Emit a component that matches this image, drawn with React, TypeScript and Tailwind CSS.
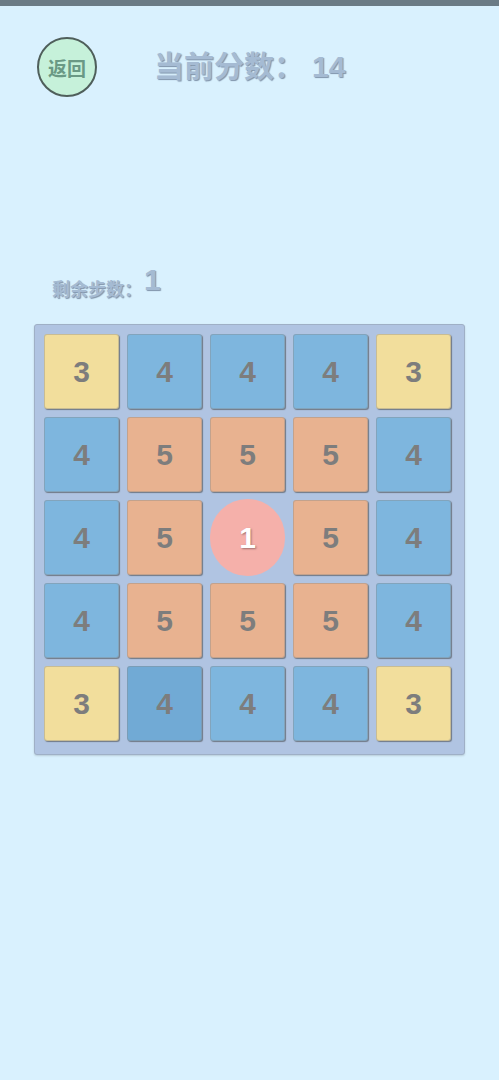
import React from "react";

type Cell = { v: number; c: string; circle?: boolean };

const Y = "bg-[#f2de9c]";
const B = "bg-[#7eb6de]";
const BD = "bg-[#71aad5]";
const O = "bg-[#e8b290]";

const grid: Cell[][] = [
  [{ v: 3, c: Y }, { v: 4, c: B }, { v: 4, c: B }, { v: 4, c: B }, { v: 3, c: Y }],
  [{ v: 4, c: B }, { v: 5, c: O }, { v: 5, c: O }, { v: 5, c: O }, { v: 4, c: B }],
  [{ v: 4, c: B }, { v: 5, c: O }, { v: 1, c: "", circle: true }, { v: 5, c: O }, { v: 4, c: B }],
  [{ v: 4, c: B }, { v: 5, c: O }, { v: 5, c: O }, { v: 5, c: O }, { v: 4, c: B }],
  [{ v: 3, c: Y }, { v: 4, c: BD }, { v: 4, c: B }, { v: 4, c: B }, { v: 3, c: Y }],
];

export default function App() {
  return (
    <div
      className="w-full min-h-[1080px] bg-[#d9f1fe]"
      style={{ fontFamily: '"Noto Sans CJK SC", "Noto Sans", sans-serif' }}
    >
      <div className="h-[6px] bg-[#6b7b85]" />
      <div className="flex items-center pl-[37px] pt-[31px]">
        <button className="w-[60px] h-[60px] rounded-full bg-[#c6f1da] border-2 border-[#4f5f5b] flex items-center justify-center text-[19px] font-bold text-[#6a9985] leading-none">
          返回
        </button>
        <div className="ml-[57px] text-[30px] font-bold text-[#a5bbd3] leading-none [text-shadow:1px_1px_1px_#7f93aa] -mt-[3px]">
          当前分数：<span style={{ fontFamily: '"Liberation Sans", sans-serif' }} className="ml-[8px]">14</span>
        </div>
      </div>
      <div className="flex items-end pl-[52px] mt-[168px] text-[#a5bbd3] font-bold [text-shadow:1px_1px_1px_#7f93aa]">
        <span className="text-[18px] leading-none">剩余步数：</span>
        <span className="text-[30px] leading-none ml-[2px] mb-[2px]" style={{ fontFamily: '"Liberation Sans", sans-serif' }}>1</span>
      </div>
      <div className="ml-[34px] mt-[27px] w-[431px] bg-[#b0c4e2] border border-[#9fb0c6] rounded-[3px] pl-[9px] pt-[9px] pr-[13px] pb-[13px] flex flex-col gap-[8px] shadow-[0_1px_2px_rgba(0,0,0,0.15)]">
        {grid.map((row, r) => (
          <div key={r} className="flex gap-[8px]">
            {row.map((cell, i) =>
              cell.circle ? (
                <div key={i} className="w-[75px] h-[75px] flex items-center justify-center">
                  <div className="w-[77px] h-[77px] rounded-full bg-[#f5b0aa] flex items-center justify-center text-white text-[30px] font-bold [text-shadow:1px_1px_2px_#a07070]" style={{ fontFamily: '"Liberation Sans", sans-serif' }}>
                    1
                  </div>
                </div>
              ) : (
                <div
                  key={i}
                  className={`w-[75px] h-[75px] ${cell.c} rounded-[3px] border border-[#8a8a8a]/40 shadow-[1px_1px_1px_rgba(60,60,60,0.55)] flex items-center justify-center text-[30px] font-bold text-[#7d7d7d]`}
                  style={{ fontFamily: '"Liberation Sans", sans-serif' }}
                >
                  {cell.v}
                </div>
              )
            )}
          </div>
        ))}
      </div>
    </div>
  );
}
